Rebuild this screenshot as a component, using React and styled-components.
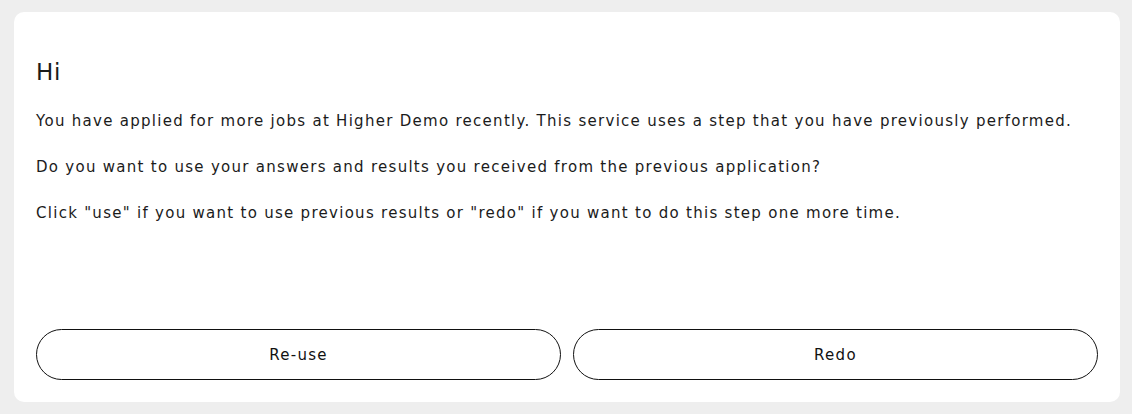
import { createGlobalStyle, styled } from "styled-components";

const GlobalStyle = createGlobalStyle`
  html, body {
    margin: 0;
    padding: 0;
    background: #eeeeee;
  }
  body {
    font-family: "DejaVu Sans", "Liberation Sans", sans-serif;
    color: #1b1b1b;
  }
`;

const Page = styled.div`
  height: 414px;
  box-sizing: border-box;
  padding: 12px 12px 12px 14px;
  display: flex;
`;

const Card = styled.div`
  flex: 1;
  background: #ffffff;
  border-radius: 10px;
  padding: 44px 22px 22px;
  display: flex;
  flex-direction: column;
`;

const Title = styled.h1`
  margin: 0 0 22px;
  font-size: 23px;
  font-weight: 400;
  line-height: 32px;
  letter-spacing: 0.6px;
`;

const Paragraph = styled.p`
  margin: 0 0 23px;
  font-size: 15px;
  line-height: 23px;
  letter-spacing: 1.28px;
`;

const Actions = styled.div`
  margin-top: auto;
  display: grid;
  grid-template-columns: 1fr 1fr;
  column-gap: 12px;
`;

const Button = styled.button`
  height: 51px;
  padding-top: 2px;
  border: 1px solid #111111;
  border-radius: 26px;
  background: #ffffff;
  font-family: inherit;
  font-size: 15px;
  font-weight: 500;
  letter-spacing: 1.3px;
  color: #111111;
  cursor: pointer;
`;

const App = () => {
  return (
    <>
      <GlobalStyle />
      <Page>
        <Card>
          <Title>Hi</Title>
          <Paragraph>
            You have applied for more jobs at Higher Demo recently. This service
            uses a step that you have previously performed.
          </Paragraph>
          <Paragraph>
            Do you want to use your answers and results you received from the
            previous application?
          </Paragraph>
          <Paragraph>
            Click "use" if you want to use previous results or "redo" if you want
            to do this step one more time.
          </Paragraph>
          <Actions>
            <Button>Re-use</Button>
            <Button>Redo</Button>
          </Actions>
        </Card>
      </Page>
    </>
  );
};

export default App;
